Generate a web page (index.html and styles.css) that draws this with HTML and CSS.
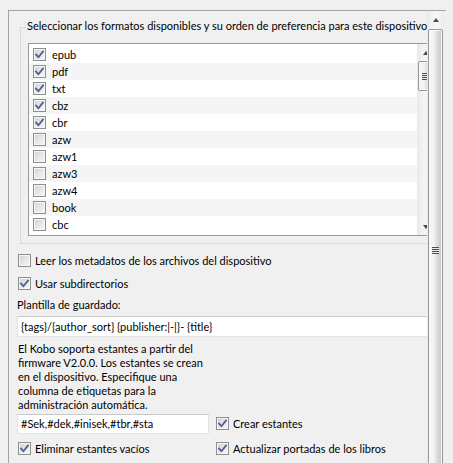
FILE: index.html
```html
<!DOCTYPE html>
<html lang="es">
<head>
<meta charset="utf-8">
<title>Kobo</title>
<link rel="stylesheet" href="styles.css">
</head>
<body>
<div class="frame">
  <div class="viewport">
    <div class="group">
      <div class="group-title">Seleccionar los formatos disponibles y su orden de preferencia para este dispositivo</div>
      <div class="list">
        <div class="list-items">
          <div class="row"><span class="cb on"><svg viewBox="0 0 11 11"><path d="M2 5.6 L4.4 8.2 L9 2.6"/></svg></span><span>epub</span></div>
          <div class="row"><span class="cb on"><svg viewBox="0 0 11 11"><path d="M2 5.6 L4.4 8.2 L9 2.6"/></svg></span><span>pdf</span></div>
          <div class="row"><span class="cb on"><svg viewBox="0 0 11 11"><path d="M2 5.6 L4.4 8.2 L9 2.6"/></svg></span><span>txt</span></div>
          <div class="row"><span class="cb on"><svg viewBox="0 0 11 11"><path d="M2 5.6 L4.4 8.2 L9 2.6"/></svg></span><span>cbz</span></div>
          <div class="row"><span class="cb on"><svg viewBox="0 0 11 11"><path d="M2 5.6 L4.4 8.2 L9 2.6"/></svg></span><span>cbr</span></div>
          <div class="row"><span class="cb"></span><span>azw</span></div>
          <div class="row"><span class="cb"></span><span>azw1</span></div>
          <div class="row"><span class="cb"></span><span>azw3</span></div>
          <div class="row"><span class="cb"></span><span>azw4</span></div>
          <div class="row"><span class="cb"></span><span>book</span></div>
          <div class="row"><span class="cb"></span><span>cbc</span></div>
        </div>
        <div class="list-scroll">
          <div class="sbtn"><span class="tri-up"></span></div>
          <div class="mini-thumb"><span class="grip"></span></div>
          <div class="track-fill"></div>
          <div class="sbtn"><span class="tri-down"></span></div>
        </div>
      </div>
    </div>

    <div class="check-row first"><span class="cb"></span><span>Leer los metadatos de los archivos del dispositivo</span></div>
    <div class="check-row"><span class="cb on"><svg viewBox="0 0 11 11"><path d="M2 5.6 L4.4 8.2 L9 2.6"/></svg></span><span>Usar subdirectorios</span></div>
    <div class="label">Plantilla de guardado:</div>
    <div class="field wide">{tags}/{author_sort} {publisher:|-|}- {title}</div>
    <p class="note">El Kobo soporta estantes a partir del<br>firmware V2.0.0. Los estantes se crean<br>en el dispositivo. Especifique una<br>columna de etiquetas para la<br>administración automática.</p>
    <div class="shelves">
      <div class="field">#Sek,#dek,#inisek,#tbr,#sta</div>
      <div class="check-cell"><span class="cb on"><svg viewBox="0 0 11 11"><path d="M2 5.6 L4.4 8.2 L9 2.6"/></svg></span><span>Crear estantes</span></div>
      <div class="check-cell left"><span class="cb on"><svg viewBox="0 0 11 11"><path d="M2 5.6 L4.4 8.2 L9 2.6"/></svg></span><span>Eliminar estantes vacíos</span></div>
      <div class="check-cell"><span class="cb on"><svg viewBox="0 0 11 11"><path d="M2 5.6 L4.4 8.2 L9 2.6"/></svg></span><span>Actualizar portadas de los libros</span></div>
    </div>
  </div>
  <div class="vscroll">
    <div class="sbtn"><span class="tri-up"></span></div>
    <div class="big-thumb"><span class="grip"></span></div>
  </div>
</div>
</body>
</html>
```
FILE: styles.css
```css
html, body {
  margin: 0;
  padding: 0;
}
body {
  width: 453px;
  height: 463px;
  overflow: hidden;
  background: #f0f0f0;
  font-family: Lato, "Noto Sans", sans-serif;
  font-size: 11px;
  line-height: 15px;
  color: #000;
}
.frame {
  margin: 10px 0 0 8px;
  border-top: 1px solid #a3a3a3;
  border-left: 1px solid #a3a3a3;
  display: flex;
  height: 453px;
  width: 437px;
  overflow: hidden;
}
.viewport {
  width: 418px;
  flex: none;
  overflow: hidden;
}
.group {
  margin: 16px 0 0 11px;
  width: 423px;
  box-sizing: border-box;
  border: 1px solid #d9d9d9;
  padding: 0 0 7px 0;
}
.group-title {
  margin: -10px 0 0 5px;
  padding: 0 1px;
  width: max-content;
  background: #f0f0f0;
  white-space: nowrap;
}
.list {
  margin: 10px 0 0 7px;
  width: 407px;
  height: 193px;
  box-sizing: border-box;
  border: 1px solid #9a9a9a;
  background: #fff;
  display: flex;
}
.list-items {
  flex: 1;
  padding-top: 2px;
  overflow: hidden;
}
.row {
  height: 17px;
  display: flex;
  align-items: center;
  padding-left: 4px;
  gap: 6px;
}
.row:nth-child(even) {
  background: #f5f5f5;
}
.cb {
  width: 13px;
  height: 13px;
  box-sizing: border-box;
  flex: none;
  border: 1px solid #8e8f8f;
  background: linear-gradient(135deg, #cfd0d2 0%, #e6e6e6 50%, #f8f8f8 100%);
  box-shadow: inset 0 0 0 1px #f6f6f6;
  display: flex;
}
.cb svg {
  width: 11px;
  height: 11px;
}
.cb path {
  fill: none;
  stroke: #4d5f93;
  stroke-width: 1.8;
  stroke-linecap: square;
}
.list-scroll {
  width: 17px;
  flex: none;
  display: flex;
  flex-direction: column;
  background: linear-gradient(to right, #e9e9e9, #f4f4f4 40%, #f4f4f4 60%, #ebebeb);
}
.sbtn {
  height: 17px;
  flex: none;
  display: flex;
  align-items: center;
  justify-content: center;
}
.tri-up {
  width: 0;
  height: 0;
  border-left: 3.5px solid transparent;
  border-right: 3.5px solid transparent;
  border-bottom: 4px solid #4a4a4a;
}
.tri-down {
  width: 0;
  height: 0;
  border-left: 3.5px solid transparent;
  border-right: 3.5px solid transparent;
  border-top: 4px solid #4a4a4a;
}
.track-fill {
  flex: 1;
}
.mini-thumb, .big-thumb {
  box-sizing: border-box;
  border: 1px solid #979797;
  border-radius: 2px;
  background: linear-gradient(to right, #f4f4f4 0%, #f4f4f4 38%, #e3e3e3 52%, #d6d6d6 72%, #cbcbcb 88%, #dedede 100%);
  box-shadow: inset 0 0 0 1px #fafafa;
  display: flex;
  align-items: center;
  justify-content: center;
  flex: none;
}
.mini-thumb {
  height: 30px;
  margin: 0 1px;
}
.grip {
  width: 7px;
  height: 7px;
  background: repeating-linear-gradient(to bottom, #4f4f4f 0 1px, #e8e8e8 1px 2px);
}
.vscroll {
  width: 17px;
  flex: none;
  display: flex;
  flex-direction: column;
  background: linear-gradient(to right, #e9e9e9, #f5f5f5 40%, #f5f5f5 60%, #ececec);
}
.big-thumb {
  height: 442px;
  margin: 1px 1px 0 1px;
}
.check-row {
  height: 23px;
  display: flex;
  align-items: center;
  gap: 4px;
  margin-left: 9px;
}
.check-row.first {
  margin-top: 5px;
}
.label {
  margin: 2px 0 0 8px;
}
.field {
  box-sizing: border-box;
  height: 21px;
  background: #fff;
  border: 1px solid #e3e3e3;
  border-top-color: #c9c9c9;
  padding: 0 3px;
  display: flex;
  align-items: center;
  white-space: nowrap;
}
.field.wide {
  margin: 4px 0 0 8px;
  width: 430px;
}
.note {
  margin: 5px 0 0 9px;
  line-height: 14px;
}
.shelves {
  margin: 1px 0 0 8px;
  display: grid;
  grid-template-columns: 192px auto;
  column-gap: 7px;
  row-gap: 4px;
  align-items: center;
}
.shelves .field {
  height: 20px;
}
.check-cell {
  display: flex;
  align-items: center;
  gap: 4px;
  height: 21px;
}
.check-cell.left {
  padding-left: 1px;
}
```
